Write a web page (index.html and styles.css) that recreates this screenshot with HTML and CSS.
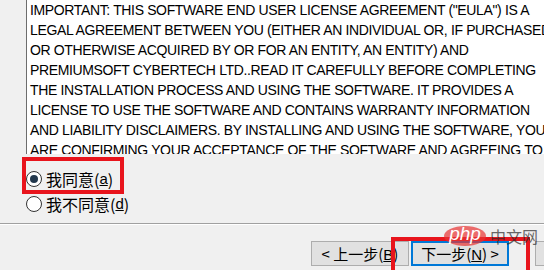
FILE: index.html
```html
<!DOCTYPE html>
<html lang="zh-CN">
<head>
    <meta charset="UTF-8">
    <meta name="viewport" content="width=device-width, initial-scale=1.0">
    <title>许可协议</title>
    <link rel="stylesheet" href="styles.css">
</head>
<body>
    <div class="eula">
        <p>IMPORTANT: THIS SOFTWARE END USER LICENSE AGREEMENT ("EULA") IS A</p>
        <p>LEGAL AGREEMENT BETWEEN YOU (EITHER AN INDIVIDUAL OR, IF PURCHASED</p>
        <p>OR OTHERWISE ACQUIRED BY OR FOR AN ENTITY, AN ENTITY) AND</p>
        <p>PREMIUMSOFT CYBERTECH LTD..READ IT CAREFULLY BEFORE COMPLETING</p>
        <p>THE INSTALLATION PROCESS AND USING THE SOFTWARE. IT PROVIDES A</p>
        <p>LICENSE TO USE THE SOFTWARE AND CONTAINS WARRANTY INFORMATION</p>
        <p>AND LIABILITY DISCLAIMERS. BY INSTALLING AND USING THE SOFTWARE, YOU</p>
        <p>ARE CONFIRMING YOUR ACCEPTANCE OF THE SOFTWARE AND AGREEING TO</p>
    </div>

    <div class="choices">
        <label class="choice"><span class="radio checked"></span>我同意(<u>a</u>)</label>
        <label class="choice"><span class="radio"></span>我不同意(<u>d</u>)</label>
    </div>

    <div class="separator"></div>

    <div class="buttons">
        <button class="btn">&lt; 上一步(<u>B</u>)</button>
        <button class="btn focused">下一步(<u>N</u>) &gt;</button>
        <button class="btn cancel"></button>
    </div>

    <div class="mark mark-agree"></div>
    <div class="mark mark-next"></div>

    <div class="watermark"><span class="wm-php">php</span><span class="wm-cn">中文网</span></div>
</body>
</html>
```

FILE: styles.css
```css
html {
    overflow: hidden;
}
body {
    margin: 0;
    padding: 0;
    width: 544px;
    height: 270px;
    overflow: hidden;
    background-color: #f0f0f0;
    position: relative;
    font-family: "Liberation Sans", Arial, "Noto Sans CJK SC", sans-serif;
}

.eula {
    margin-left: 26px;
    height: 154px;
    background-color: #fff;
    border-left: 1px solid #6d6d6d;
    padding-left: 3px;
    overflow: hidden;
    font-size: 14px;
    line-height: 20px;
    letter-spacing: -0.36px;
    color: #000;
}
.eula p {
    margin: 0;
    white-space: nowrap;
}

.choices {
    padding-top: 12px;
    padding-left: 26px;
}
.choice {
    display: flex;
    align-items: center;
    height: 25px;
    font-family: "Noto Sans CJK SC", sans-serif;
    font-size: 16px;
    color: #000;
}
.choice u {
    font-family: "Liberation Sans", sans-serif;
    font-size: 15px;
}
.radio {
    width: 14px;
    height: 14px;
    border: 1px solid #333;
    border-radius: 50%;
    background-color: #fff;
    margin-right: 4px;
    display: flex;
    justify-content: center;
    align-items: center;
}
.radio.checked::after {
    content: "";
    width: 8px;
    height: 8px;
    border-radius: 50%;
    background-color: #22384d;
}

.separator {
    margin-top: 7px;
    border-top: 1px solid #a0a0a0;
    border-bottom: 1px solid #fff;
}

.buttons {
    display: flex;
    padding-left: 311px;
    margin-top: 16px;
}
.btn {
    width: 98px;
    height: 25px;
    margin-right: 2px;
    background-color: #e1e1e1;
    border: 1px solid #adadad;
    font-family: "Noto Sans CJK SC", sans-serif;
    font-size: 15px;
    line-height: 21px;
    color: #000;
    padding: 0;
    flex-shrink: 0;
    white-space: nowrap;
}
.btn u {
    font-family: "Liberation Sans", sans-serif;
}
.btn.focused {
    border: 2px solid #0078d7;
}
.btn.cancel {
    margin-left: 24px;
}

/* red annotation boxes */
.mark {
    position: absolute;
    border: 4px solid #e8141c;
}
.mark-agree {
    left: 22px;
    top: 157px;
    width: 94px;
    height: 29px;
}
.mark-next {
    left: 391px;
    top: 237px;
    width: 131px;
    height: 60px;
}

.watermark {
    position: absolute;
    left: 444px;
    top: 226px;
    display: flex;
    align-items: center;
}
.wm-php {
    width: 42px;
    height: 20px;
    border-radius: 50%;
    background-color: rgba(232, 50, 50, 0.7);
    color: #fff;
    font-style: italic;
    font-size: 19px;
    line-height: 16px;
    text-align: center;
    margin-right: 4px;
}
.wm-cn {
    font-family: "Noto Sans CJK SC", sans-serif;
    font-size: 16px;
    line-height: 20px;
    color: rgba(40, 40, 40, 0.7);
}
```
